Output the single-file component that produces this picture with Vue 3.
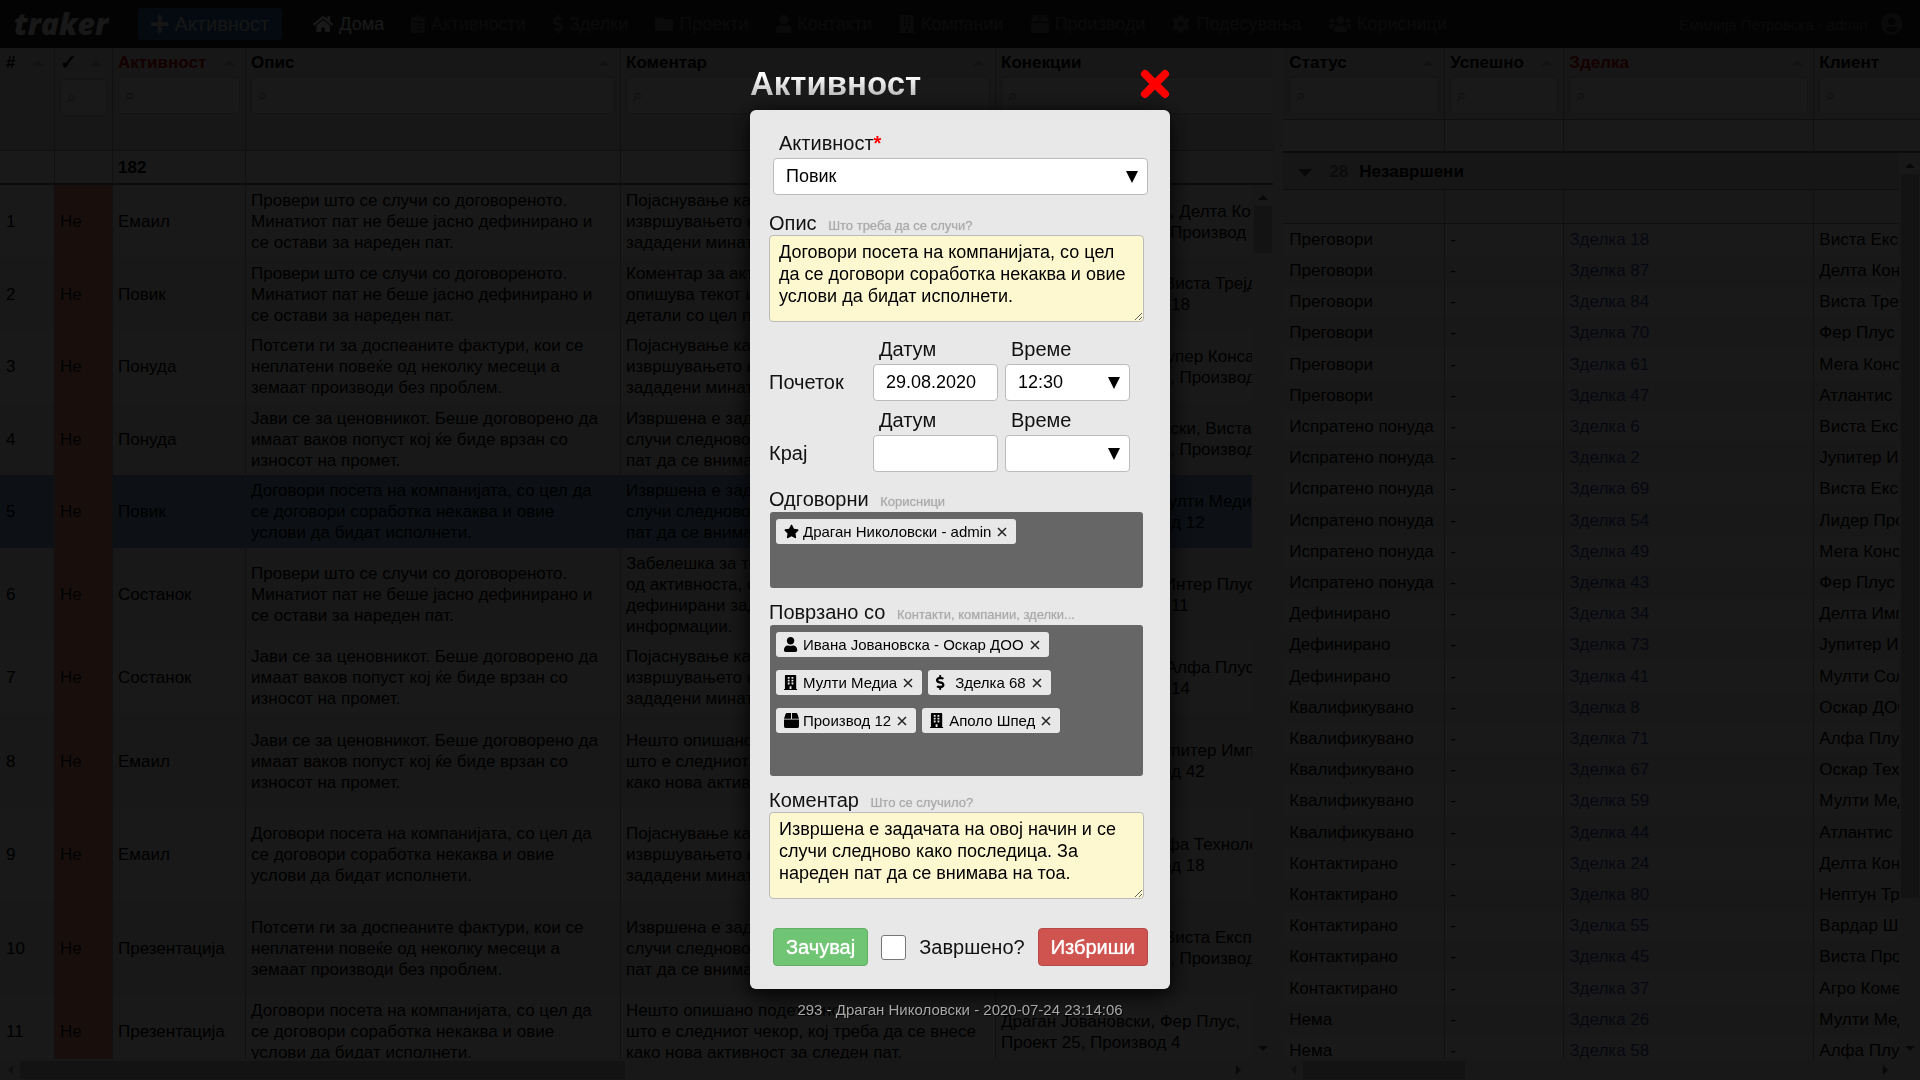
<script setup>
import { ref } from 'vue'

const icons = {
  plus: { w: 448, d: 'M416 208H272V64c0-17.67-14.33-32-32-32h-32c-17.67 0-32 14.33-32 32v144H32c-17.67 0-32 14.33-32 32v32c0 17.67 14.33 32 32 32h144v144c0 17.67 14.33 32 32 32h32c17.67 0 32-14.33 32-32V304h144c17.67 0 32-14.33 32-32v-32c0-17.67-14.33-32-32-32z' },
  home: { w: 576, d: 'M280.37 148.26L96 300.11V464a16 16 0 0 0 16 16l112.06-.29a16 16 0 0 0 15.92-16V368a16 16 0 0 1 16-16h64a16 16 0 0 1 16 16v95.64a16 16 0 0 0 16 16.05L464 480a16 16 0 0 0 16-16V300L295.67 148.26a12.19 12.19 0 0 0-15.3 0zM571.6 251.47L488 182.56V44.05a12 12 0 0 0-12-12h-56a12 12 0 0 0-12 12v72.61L318.47 43a48 48 0 0 0-61 0L4.34 251.47a12 12 0 0 0-1.6 16.9l25.5 31A12 12 0 0 0 45.15 301l235.22-193.74a12.19 12.19 0 0 1 15.3 0L530.9 301a12 12 0 0 0 16.9-1.6l25.5-31a12 12 0 0 0-1.7-16.93z' },
  tasks: { w: 384, d: 'M336 64h-80c0-35.300-28.700-64-64-64s-64 28.700-64 64H48C21.500 64 0 85.500 0 112v352c0 26.500 21.500 48 48 48h288c26.500 0 48-21.500 48-48V112c0-26.500-21.500-48-48-48zM96 424a24 24 0 1 1 0-48 24 24 0 0 1 0 48zm0-96a24 24 0 1 1 0-48 24 24 0 0 1 0 48zm0-96a24 24 0 1 1 0-48 24 24 0 0 1 0 48zm96-192a24 24 0 1 1 0 48 24 24 0 0 1 0-48zm128 376H160v-32h160zm0-96H160v-32h160zm0-96H160v-32h160z' },
  deal: { w: 288, d: 'M209.2 233.4l-108-31.6C88.7 198.2 80 186.5 80 173.5c0-16.3 13.2-29.5 29.5-29.5h66.3c12.2 0 24.2 3.7 34.2 10.5 6.1 4.1 14.3 3.1 19.5-2l34.8-34c7.1-6.9 6.1-18.4-1.8-24.5C238 74.800 207.400 64.100 176 64V16c0-8.800-7.200-16-16-16h-32c-8.800 0-16 7.200-16 16v48h-2.500C45.800 64-5.400 118.700.5 183.600c4.200 46.100 39.400 83.600 83.800 96.600l102.500 30c12.500 3.700 21.200 15.300 21.200 28.300 0 16.300-13.200 29.500-29.500 29.500h-66.300C100 368 88 364.300 78 357.500c-6.100-4.100-14.300-3.100-19.500 2l-34.800 34c-7.100 6.900-6.100 18.400 1.800 24.500 24.500 19.200 55.100 29.900 86.500 30v48c0 8.800 7.200 16 16 16h32c8.800 0 16-7.200 16-16v-48.200c46.600-.9 90.300-28.600 105.700-72.700 21.500-61.600-14.600-124.800-72.500-141.700z' },
  folder: { w: 512, d: 'M464 128H272l-64-64H48C21.49 64 0 85.49 0 112v288c0 26.51 21.49 48 48 48h416c26.51 0 48-21.49 48-48V176c0-26.51-21.49-48-48-48z' },
  user: { w: 448, d: 'M224 256c70.7 0 128-57.3 128-128S294.7 0 224 0 96 57.3 96 128s57.3 128 128 128zm89.6 32h-16.7c-22.2 10.2-46.9 16-72.9 16s-50.6-5.8-72.9-16h-16.7C60.2 288 0 348.2 0 422.4V464c0 26.5 21.5 48 48 48h352c26.5 0 48-21.5 48-48v-41.6c0-74.2-60.2-134.4-134.4-134.4z' },
  building: { w: 448, d: 'M436 480h-20V24c0-13.3-10.7-24-24-24H56C42.7 0 32 10.7 32 24v456H12c-6.6 0-12 5.4-12 12v20h448v-20c0-6.6-5.4-12-12-12zM128 76c0-6.6 5.4-12 12-12h40c6.6 0 12 5.4 12 12v40c0 6.6-5.4 12-12 12h-40c-6.6 0-12-5.4-12-12V76zm0 96c0-6.6 5.4-12 12-12h40c6.6 0 12 5.4 12 12v40c0 6.6-5.4 12-12 12h-40c-6.6 0-12-5.4-12-12v-40zm52 148h-40c-6.6 0-12-5.4-12-12v-40c0-6.6 5.4-12 12-12h40c6.6 0 12 5.4 12 12v40c0 6.6-5.4 12-12 12zm76 160h-64v-84c0-6.6 5.4-12 12-12h40c6.6 0 12 5.4 12 12v84zm64-172c0 6.6-5.4 12-12 12h-40c-6.6 0-12-5.4-12-12v-40c0-6.6 5.4-12 12-12h40c6.6 0 12 5.4 12 12v40zm0-96c0 6.6-5.4 12-12 12h-40c-6.6 0-12-5.4-12-12v-40c0-6.6 5.4-12 12-12h40c6.6 0 12 5.4 12 12v40zm0-96c0 6.6-5.4 12-12 12h-40c-6.6 0-12-5.4-12-12V76c0-6.6 5.4-12 12-12h40c6.6 0 12 5.4 12 12v40z' },
  box: { w: 512, d: 'M509.5 184.6L458.9 32.8C452.4 13.2 434.1 0 413.4 0H272v192h238.7c-.4-2.5-.4-5-1.2-7.4zM240 0H98.6c-20.7 0-39 13.2-45.5 32.8L2.5 184.6c-.8 2.4-.8 4.9-1.2 7.4H240V0zM0 224v240c0 26.5 21.5 48 48 48h416c26.5 0 48-21.5 48-48V224H0z' },
  cog: { w: 512, d: 'M487.4 315.7l-42.6-24.6c4.3-23.2 4.3-47 0-70.2l42.6-24.6c4.9-2.8 7.1-8.6 5.5-14-11.1-35.6-30-67.8-54.7-94.6-3.8-4.1-10-5.1-14.8-2.3L380.8 110c-17.9-15.4-38.5-27.3-60.8-35.1V25.8c0-5.6-3.9-10.5-9.4-11.7-36.7-8.2-74.3-7.8-109.2 0-5.5 1.2-9.4 6.1-9.4 11.7V75c-22.2 7.9-42.8 19.8-60.8 35.1L88.7 85.5c-4.9-2.8-11-1.9-14.8 2.3-24.7 26.7-43.6 58.9-54.7 94.6-1.7 5.4.6 11.2 5.5 14L67.3 221c-4.3 23.2-4.3 47 0 70.2l-42.6 24.6c-4.9 2.8-7.1 8.6-5.5 14 11.1 35.6 30 67.8 54.7 94.6 3.8 4.1 10 5.1 14.8 2.3l42.6-24.6c17.9 15.4 38.5 27.3 60.8 35.1v49.2c0 5.6 3.9 10.5 9.4 11.7 36.7 8.2 74.3 7.8 109.2 0 5.5-1.2 9.4-6.1 9.4-11.7v-49.2c22.2-7.9 42.8-19.8 60.8-35.1l42.6 24.6c4.9 2.8 11 1.9 14.8-2.3 24.7-26.7 43.6-58.9 54.7-94.6 1.5-5.5-.7-11.3-5.6-14.1zM256 336c-44.1 0-80-35.9-80-80s35.9-80 80-80 80 35.9 80 80-35.9 80-80 80z' },
  users: { w: 640, d: 'M96 224c35.3 0 64-28.7 64-64s-28.7-64-64-64-64 28.7-64 64 28.7 64 64 64zm448 0c35.3 0 64-28.7 64-64s-28.7-64-64-64-64 28.7-64 64 28.7 64 64 64zm32 32h-64c-17.6 0-33.5 7.1-45.1 18.6 40.3 22.1 68.9 62 75.1 109.4h66c17.7 0 32-14.3 32-32v-32c0-35.3-28.7-64-64-64zm-256 0c61.9 0 112-50.1 112-112S381.9 32 320 32 208 82.1 208 144s50.1 112 112 112zm76.8 32h-8.3c-20.8 10-43.9 16-68.5 16s-47.6-6-68.5-16h-8.3C179.6 288 128 339.6 128 403.2V432c0 26.5 21.5 48 48 48h288c26.5 0 48-21.5 48-48v-28.8c0-63.6-51.6-115.2-115.2-115.2zm-223.7-13.4C161.5 263.1 145.6 256 128 256H64c-35.3 0-64 28.7-64 64v32c0 17.7 14.3 32 32 32h65.9c6.3-47.4 34.9-87.3 75.2-109.4z' },
  account: { w: 496, d: 'M248 8C111 8 0 119 0 256s111 248 248 248 248-111 248-248S385 8 248 8zm0 96c48.6 0 88 39.4 88 88s-39.4 88-88 88-88-39.4-88-88 39.4-88 88-88zm0 344c-58.7 0-111.3-26.6-146.5-68.2 18.8-35.4 55.6-59.8 98.5-59.8 2.4 0 4.8.4 7.1 1.1 13 4.2 26.6 6.9 40.9 6.9 14.3 0 28-2.7 40.9-6.9 2.3-.7 4.7-1.1 7.1-1.1 42.9 0 79.7 24.4 98.5 59.8C359.3 421.4 306.7 448 248 448z' },
  star: { w: 576, d: 'M259.3 17.8L194 150.2 47.9 171.5c-26.2 3.8-36.7 36.1-17.7 54.6l105.7 103-25 145.5c-4.5 26.3 23.2 46 46.4 33.7L288 439.6l130.7 68.7c23.2 12.2 50.9-7.4 46.4-33.7l-25-145.5 105.7-103c19-18.5 8.5-50.8-17.7-54.6L382 150.2 316.7 17.8c-11.7-23.6-45.6-23.9-57.4 0z' }
}

const nav = [
  ['home', 'Дома'], ['tasks', 'Активности'], ['deal', 'Зделки'], ['folder', 'Проекти'],
  ['user', 'Контакти'], ['building', 'Компании'], ['box', 'Производи'],
  ['cog', 'Подесувања'], ['users', 'Корисници']
]

const taskHeads = [
  { t: '#' }, { t: '✓', search: true, check: true }, { t: 'Активност', search: true, red: true },
  { t: 'Опис', search: true }, { t: 'Коментар', search: true }, { t: 'Конекции', search: true }
]
const taskCols = [55, 58, 133, 375, 375, 300]

const check = ['Провери што се случи со договореното.', 'Минатиот пат не беше јасно дефинирано и', 'се остави за нареден пат.']
const remind = ['Потсети ги за доспеаните фактури, кои се', 'неплатени повеќе од неколку месеци а', 'земаат производи без проблем.']
const price = ['Јави се за ценовникот. Беше договорено да', 'имаат ваков попуст кој ќе биде врзан со', 'износот на промет.']
const visit = ['Договори посета на компанијата, со цел да', 'се договори соработка некаква и овие', 'услови да бидат исполнети.']
const explain = ['Појаснување како се одвивало', 'извршувањето на работите', 'зададени минатиот пат.']
const comment = ['Коментар за активноста што', 'опишува текот и сите', 'детали со цел подобро.']
const done = ['Извршена е задачата и се', 'случи следново како и', 'пат да се внимава на тоа.']
const note = ['Забелешка за текот', 'од активноста, со сите', 'дефинирани задачи и', 'информации.']
const next = ['Нешто опишано подетално и', 'што е следниот чекор, кој треба да се внесе', 'како нова активност за следен пат.']

const tasks = [
  { h: 73, kind: 'Емаил', text: check, note: explain, links: ['Даниела Стојановска, Делта Консалтинг', 'Проект 25, Зделка 5, Производ 1'] },
  { h: 72, kind: 'Повик', text: check, note: comment, links: ['Марија Николовска, Виста Трејд', 'Проект 25, Производ 18'] },
  { h: 73, kind: 'Понуда', text: remind, note: explain, links: ['Ивана Јовановска, Супер Консалтинг', 'Проект 25, Зделка 44, Производ 3'] },
  { h: 72, kind: 'Понуда', text: price, note: done, links: ['Александар Стојановски, Виста Експорт', 'Проект 25, Зделка 44, Производ 9'] },
  { h: 73, kind: 'Повик', text: visit, note: done, links: ['Ивана Јовановска, Мулти Медиа', 'Контакт 168, Производ 12'], on: true },
  { h: 93, kind: 'Состанок', text: check, note: note, links: ['Марија Николовска, Интер Плус', 'Проект 25, Производ 11'] },
  { h: 73, kind: 'Состанок', text: price, note: explain, links: ['Даниела Петровска, Алфа Плус', 'Проект 25, Производ 14'] },
  { h: 94, kind: 'Емаил', text: price, note: next, links: ['Ивана Јовановска, Јупитер Импорт', 'Контакт 168, Производ 42'] },
  { h: 93, kind: 'Емаил', text: visit, note: explain, links: ['Иван Јовановски, Алфа Технологии', 'Контакт 168, Производ 18'] },
  { h: 94, kind: 'Презентација', text: remind, note: done, links: ['Марија Николовска, Виста Експорт', 'Проект 25, Зделка 40, Производ 7'] },
  { h: 73, kind: 'Презентација', text: visit, note: next, links: ['Драган Јовановски, Фер Плус,', 'Проект 25, Производ 4'] }
]

const dealHeads = [
  { t: 'Статус' }, { t: 'Успешно' }, { t: 'Зделка', red: true }, { t: 'Клиент' }
]
const dealCols = [162, 119, 250, 180]
const deals = [
  ['Преговори', 18, 'Виста Експорт'], ['Преговори', 87, 'Делта Консалтинг'], ['Преговори', 84, 'Виста Трејд'],
  ['Преговори', 70, 'Фер Плус'], ['Преговори', 61, 'Мега Консалтинг'], ['Преговори', 47, 'Атлантис'],
  ['Испратено понуда', 6, 'Виста Експорт'], ['Испратено понуда', 2, 'Јупитер Импорт'], ['Испратено понуда', 69, 'Виста Експорт'],
  ['Испратено понуда', 54, 'Лидер Промет'], ['Испратено понуда', 49, 'Мега Консалтинг'], ['Испратено понуда', 43, 'Фер Плус'],
  ['Дефинирано', 34, 'Делта Импорт'], ['Дефинирано', 73, 'Јупитер Импорт'], ['Дефинирано', 41, 'Мулти Солуции'],
  ['Квалификувано', 8, 'Оскар ДОО'], ['Квалификувано', 71, 'Алфа Плус'], ['Квалификувано', 67, 'Оскар Технологии'],
  ['Квалификувано', 59, 'Мулти Медиа'], ['Квалификувано', 44, 'Атлантис'], ['Контактирано', 24, 'Делта Консалтинг'],
  ['Контактирано', 80, 'Нептун Трејд'], ['Контактирано', 55, 'Вардар Шпед'], ['Контактирано', 45, 'Виста Промет'],
  ['Контактирано', 37, 'Агро Комерц'], ['Нема', 26, 'Мулти Медиа'], ['Нема', 58, 'Алфа Плус']
]

const owners = [['star', 'Драган Николовски - admin']]
const related = [
  ['user', 'Ивана Јовановска - Оскар ДОО'], ['building', 'Мулти Медиа'], ['deal', 'Зделка 68'],
  ['box', 'Производ 12'], ['building', 'Аполо Шпед']
]
const description = ref('Договори посета на компанијата, со цел да се договори соработка некаква и овие услови да бидат исполнети.')
const outcome = ref('Извршена е задачата на овој начин и се случи следново како последица. За нареден пат да се внимава на тоа.')
const startDate = ref('29.08.2020')
const endDate = ref('')
const finished = ref(false)
</script>

<template>
  <div class="app">
    <header class="nav">
      <a href="#" class="logo">traker</a>
      <button type="button" class="add">
        <svg class="ic" viewBox="0 0 448 512" aria-hidden="true"><path :d="icons.plus.d" /></svg>Активност
      </button>
      <nav class="menu">
        <a v-for="([icon, label], i) in nav" :key="label" href="#" :class="{ active: i === 0 }">
          <svg class="ic" :viewBox="`0 0 ${icons[icon].w} 512`" aria-hidden="true"><path :d="icons[icon].d" /></svg>{{ label }}
        </a>
      </nav>
      <a href="#" class="account">Емилија Петровска - admin
        <svg class="ic" viewBox="0 0 496 512" aria-hidden="true"><path :d="icons.account.d" /></svg>
      </a>
    </header>

    <main class="panes">
      <section class="pane tasks">
        <div class="clip">
          <table class="head">
            <colgroup><col v-for="(w, i) in taskCols" :key="i" :style="{ width: w + 'px' }"></colgroup>
            <thead>
              <tr class="titles">
                <th v-for="h in taskHeads" :key="h.t" :class="{ red: h.red, check: h.check }">
                  <div class="title"><span>{{ h.t }}</span><i class="sort"></i></div>
                  <input v-if="h.search" type="text" placeholder="⌕" :aria-label="h.t">
                </th>
              </tr>
              <tr class="totals"><td></td><td></td><td>182</td><td></td><td></td><td></td></tr>
            </thead>
          </table>
        </div>
        <div class="body">
          <div class="clip">
            <table class="rows">
              <colgroup><col v-for="(w, i) in taskCols" :key="i" :style="{ width: w + 'px' }"></colgroup>
              <tbody>
                <tr v-for="(r, i) in tasks" :key="i" :class="{ on: r.on }" :style="{ height: r.h + 'px' }">
                  <td>{{ i + 1 }}</td>
                  <td class="no">Не</td>
                  <td>{{ r.kind }}</td>
                  <td><div v-for="l in r.text" :key="l">{{ l }}</div></td>
                  <td><div v-for="l in r.note" :key="l">{{ l }}</div></td>
                  <td><div v-for="l in r.links" :key="l">{{ l }}</div></td>
                </tr>
              </tbody>
            </table>
          </div>
          <div class="vbar"><i class="up"></i><b class="short"></b><i class="down"></i></div>
        </div>
        <div class="hbar"><i class="left"></i><b class="wide"></b><i class="right"></i></div>
      </section>

      <section class="pane deals">
        <div class="clip">
          <table class="head">
            <colgroup><col v-for="(w, i) in dealCols" :key="i" :style="{ width: w + 'px' }"></colgroup>
            <thead>
              <tr class="titles">
                <th v-for="h in dealHeads" :key="h.t" :class="{ red: h.red }">
                  <div class="title"><span>{{ h.t }}</span><i class="sort"></i></div>
                  <input type="text" placeholder="⌕" :aria-label="h.t">
                </th>
              </tr>
              <tr class="totals"><td></td><td></td><td></td><td></td></tr>
            </thead>
          </table>
        </div>
        <div class="body">
          <div class="clip">
            <table class="rows">
              <colgroup><col v-for="(w, i) in dealCols" :key="i" :style="{ width: w + 'px' }"></colgroup>
              <thead>
                <tr class="group"><th colspan="4"><i class="caret"></i><span>28</span>Незавршени</th></tr>
                <tr class="blank"><td></td><td></td><td></td><td></td></tr>
              </thead>
              <tbody>
                <tr v-for="([status, no, client], i) in deals" :key="i">
                  <td>{{ status }}</td><td>-</td><td><a href="#">Зделка {{ no }}</a></td><td>{{ client }}</td>
                </tr>
              </tbody>
            </table>
          </div>
          <div class="vbar"><i class="up"></i><b class="long"></b><i class="down"></i></div>
        </div>
        <div class="hbar"><i class="left"></i><b class="narrow"></b><i class="right"></i></div>
      </section>
    </main>

    <div class="overlay" role="dialog" aria-labelledby="dialog-title">
      <div class="dialog">
        <div class="bar">
          <h1 id="dialog-title">Активност</h1>
          <button type="button" class="close" aria-label="Затвори">
            <svg viewBox="0 0 30 30"><path d="M5 5l20 20M25 5L5 25" /></svg>
          </button>
        </div>
        <form class="card" @submit.prevent>
          <div class="field shifted">
            <label for="kind">Активност<sup>*</sup></label>
            <div class="pick">
              <select id="kind"><option>Повик</option><option>Состанок</option></select>
              <svg viewBox="0 0 12 12" aria-hidden="true"><path d="M0 0h12L6 12z" /></svg>
            </div>
          </div>

          <div class="field desc">
            <label for="desc">Опис <small>Што треба да се случи?</small></label>
            <textarea id="desc" v-model="description"></textarea>
          </div>

          <div class="when first">
            <span class="name">Почеток</span>
            <div>
              <label for="sd">Датум</label>
              <input id="sd" v-model="startDate" type="text">
            </div>
            <div>
              <label for="st">Време</label>
              <div class="pick">
                <select id="st"><option>12:30</option></select>
                <svg viewBox="0 0 12 12" aria-hidden="true"><path d="M0 0h12L6 12z" /></svg>
              </div>
            </div>
          </div>
          <div class="when">
            <span class="name">Крај</span>
            <div>
              <label for="ed">Датум</label>
              <input id="ed" v-model="endDate" type="text">
            </div>
            <div>
              <label for="et">Време</label>
              <div class="pick">
                <select id="et"><option></option></select>
                <svg viewBox="0 0 12 12" aria-hidden="true"><path d="M0 0h12L6 12z" /></svg>
              </div>
            </div>
          </div>

          <div class="field owners">
            <h2>Одговорни <small>Корисници</small></h2>
            <div class="chips small">
              <span v-for="[icon, label] in owners" :key="label" class="chip">
                <svg class="ic" :viewBox="`0 0 ${icons[icon].w} 512`" preserveAspectRatio="xMinYMid meet" aria-hidden="true"><path :d="icons[icon].d" /></svg>{{ label }}
                <button type="button" aria-label="Отстрани"><svg viewBox="0 0 10 10"><path d="M1 1l8 8M9 1L1 9" /></svg></button>
              </span>
            </div>
          </div>

          <div class="field related">
            <h2>Поврзано со <small>Контакти, компании, зделки...</small></h2>
            <div class="chips">
              <span v-for="[icon, label] in related" :key="label" class="chip">
                <svg class="ic" :viewBox="`0 0 ${icons[icon].w} 512`" preserveAspectRatio="xMinYMid meet" aria-hidden="true"><path :d="icons[icon].d" /></svg>{{ label }}
                <button type="button" aria-label="Отстрани"><svg viewBox="0 0 10 10"><path d="M1 1l8 8M9 1L1 9" /></svg></button>
              </span>
            </div>
          </div>

          <div class="field outcome">
            <label for="outcome">Коментар <small>Што се случило?</small></label>
            <textarea id="outcome" v-model="outcome"></textarea>
          </div>

          <div class="actions">
            <button type="submit" class="save">Зачувај</button>
            <label class="finished"><input v-model="finished" type="checkbox">Завршено?</label>
            <button type="button" class="delete">Избриши</button>
          </div>
        </form>
        <p class="meta">293 - Драган Николовски - 2020-07-24 23:14:06</p>
      </div>
    </div>
  </div>
</template>

<style>
body {
  margin: 0;
  overflow: hidden;
}
</style>

<style scoped>
* {
  box-sizing: border-box;
}
.app {
  display: flex;
  flex-direction: column;
  height: 100vh;
  overflow: hidden;
  background: #fff;
  color: #000;
  font: 17px/21px "Liberation Sans", Arial, sans-serif;
}
button,
input,
select,
textarea {
  margin: 0;
  color: inherit;
  font: inherit;
}
a {
  color: inherit;
  text-decoration: none;
}
.ic {
  height: 18px;
  fill: currentColor;
}

/* top bar */
.nav {
  display: flex;
  align-items: center;
  flex: none;
  height: 48px;
  padding: 0 18px 0 14px;
  background: #222;
  color: #6a6a6a;
  font-size: 18px;
  white-space: nowrap;
}
.logo {
  width: 124px;
  color: #eee;
  font: italic 800 30px/48px "Open Sans", sans-serif;
}
.add {
  display: flex;
  align-items: center;
  gap: 6px;
  height: 32px;
  padding: 0 13px;
  border: 0;
  border-radius: 4px;
  background: #2a66a0;
  color: #ddd;
  font-size: 20px;
}
.add .ic {
  height: 20px;
}
.menu {
  display: flex;
  gap: 27px;
  margin-left: 31px;
}
.menu a {
  display: flex;
  align-items: center;
  gap: 6px;
}
.menu .active {
  color: #fff;
}
.account {
  display: flex;
  align-items: center;
  gap: 13px;
  margin-left: auto;
  font-size: 15px;
}
.account .ic {
  height: 22px;
}

/* data panes */
.panes {
  display: flex;
  flex: 1;
  gap: 10px;
  min-height: 0;
  background: #f0f0f0;
}
.pane {
  display: flex;
  flex-direction: column;
  min-width: 0;
  overflow: hidden;
  background: #fff;
}
.tasks {
  flex: 2;
}
.deals {
  flex: 1;
}
.clip {
  flex: 1;
  min-width: 0;
  overflow: hidden;
}
.pane > .clip {
  flex: none;
}
table {
  width: max-content;
  border-collapse: separate;
  border-spacing: 0;
  table-layout: fixed;
  white-space: nowrap;
}
.tasks table {
  width: 1296px;
}
.deals table {
  width: 711px;
}
td,
th {
  padding: 0 5px;
  overflow: hidden;
  border-right: 1px solid #aaa;
  text-align: left;
}
td:first-child,
th:first-child {
  padding-left: 6px;
}
.titles th {
  height: 71px;
  padding-top: 4px;
  background: #e9e9e9;
  vertical-align: top;
}
.tasks .titles th {
  height: 102px;
}
.titles .red {
  color: #c00;
}
.title {
  display: flex;
  align-items: center;
  justify-content: space-between;
  padding-right: 5px;
}
.sort {
  border: 6px solid transparent;
  border-top: 0;
  border-bottom-color: #bbb;
}
.titles input {
  display: block;
  width: 100%;
  height: 37px;
  margin-top: 4px;
  padding: 0 6px;
  border: 1px solid #ccc;
  border-radius: 3px;
  background: #fff;
}
.titles .check span {
  font-size: 20px;
}
.titles .check input {
  margin-top: 6px;
}
.titles input::placeholder {
  color: #bbb;
}
.totals td {
  height: 34px;
  border-top: 1px solid #999;
  border-bottom: 2px solid #777;
  background: #f7f7f7;
  font-weight: bold;
}
.tasks .totals td {
  height: 35px;
}
.body {
  display: flex;
  flex: 1;
  min-height: 0;
}
.rows tbody tr:nth-child(even) {
  background: #efefef;
}
.rows tbody tr.on {
  background: #82a8dc;
}
.rows .no {
  background: #f59488;
  color: #111;
}
.group th {
  height: 37px;
  padding-left: 15px;
  border: 0;
  border-bottom: 1px solid #999;
  background: #ddd;
}
.group span {
  margin: 0 11px 0 17px;
  color: #777;
}
.caret {
  display: inline-block;
  border: 7px solid transparent;
  border-top: 8px solid #555;
  border-bottom: 0;
}
.blank td {
  height: 34px;
  border-bottom: 1px solid #999;
  background: #f3f3f3;
}
.deals tbody tr {
  height: 31px;
}
.deals tbody tr:nth-child(5n) {
  height: 32px;
}
.deals tbody a {
  color: #3f4fa8;
}

/* scrollbars */
.vbar,
.hbar {
  display: flex;
  align-items: center;
  flex: none;
  background: #f3f3f3;
}
.vbar {
  flex-direction: column;
  width: 21px;
  padding: 10px 0 8px;
}
.hbar {
  height: 21px;
  padding: 0 32px 0 8px;
}
.vbar b,
.hbar b {
  background: #c1c1c1;
}
.vbar b {
  width: 18px;
  margin: 6px 0 auto;
}
.hbar b {
  height: 18px;
  margin: 0 auto 0 7px;
}
.short {
  height: 47px;
}
.long {
  flex: 0 1 724px;
}
.wide {
  width: 605px;
}
.narrow {
  width: 162px;
}
.up,
.down,
.left,
.right {
  border: 5px solid transparent;
}
.up {
  border-top: 0;
  border-bottom-color: #505050;
}
.down {
  border-bottom: 0;
  border-top-color: #505050;
}
.left {
  border-left: 0;
  border-right-color: #a0a0a0;
}
.right {
  border-right: 0;
  border-left-color: #505050;
}

/* dialog */
.overlay {
  position: fixed;
  inset: 0;
  display: flex;
  justify-content: center;
  align-items: flex-start;
  padding-top: 58px;
  background: rgba(0, 0, 0, 0.9);
}
.dialog {
  width: 420px;
}
.bar {
  display: flex;
  align-items: center;
  justify-content: space-between;
  height: 52px;
}
h1 {
  margin: 0;
  background: linear-gradient(#fff 30%, #bbb 80%);
  background-clip: text;
  color: transparent;
  font-size: 33px;
  line-height: 40px;
}
.close {
  width: 30px;
  height: 30px;
  padding: 0;
  border: 0;
  background: none;
}
.close svg {
  display: block;
  fill: none;
  stroke: #f00;
  stroke-width: 8;
  stroke-linecap: round;
}
.card {
  padding: 21px 26px 23px 19px;
  border-radius: 6px;
  background: #e8e8e8;
  box-shadow: 0 5px 25px #000;
  font-size: 18px;
}
.card label,
.card h2,
.name {
  display: block;
  margin: 0;
  color: #111;
  font-size: 20px;
  font-weight: normal;
  line-height: 24px;
}
sup {
  color: #f00;
  font-size: 20px;
  font-weight: bold;
  line-height: 0;
  vertical-align: baseline;
}
small {
  margin-left: 6px;
  color: #aaa;
  font-size: 13px;
  line-height: 0;
  text-shadow: 0 0 1px #bbb;
}
.shifted {
  padding-left: 4px;
  margin-right: -4px;
}
.shifted label {
  margin: 0 0 3px 6px;
}
.desc {
  margin-top: 16px;
}
.owners {
  margin-top: 15px;
}
.related,
.outcome {
  margin-top: 12px;
}
textarea {
  display: block;
  width: 100%;
  height: 87px;
  padding: 5px 9px;
  border: 1px solid #bbb;
  border-radius: 4px;
  background: #fdf8cf;
  line-height: 22px;
}
.pick {
  display: grid;
  align-items: center;
}
.pick > * {
  grid-area: 1 / 1;
}
.pick svg {
  justify-self: end;
  width: 12px;
  height: 12px;
  margin-right: 10px;
  pointer-events: none;
}
select,
.when input {
  width: 100%;
  height: 37px;
  padding: 0 12px;
  border: 1px solid #bbb;
  border-radius: 4px;
  appearance: none;
  background: #fff;
}
.when {
  display: grid;
  grid-template-columns: 97px 125px 125px;
  gap: 7px;
  align-items: end;
  margin-top: 7px;
}
.when.first {
  margin-top: 15px;
}
.when label {
  margin: 0 0 3px 6px;
}
.when .name {
  line-height: 37px;
}
.when input {
  display: block;
}
.chips {
  display: flex;
  flex-wrap: wrap;
  align-content: flex-start;
  gap: 13px 6px;
  min-height: 151px;
  margin: 1px 1px 0;
  padding: 7px 6px;
  border-radius: 3px;
  background: #666;
}
.chips.small {
  min-height: 76px;
}
.chip {
  display: flex;
  align-items: center;
  gap: 6px;
  height: 25px;
  padding: 0 9px 0 8px;
  border-radius: 3px;
  background: #e8e8e8;
  font-size: 15px;
}
.chip .ic {
  width: 15px;
  height: 15px;
  margin-right: -2px;
}
.chip button {
  width: 10px;
  height: 10px;
  padding: 0;
  border: 0;
  background: none;
}
.chip button svg {
  display: block;
  width: 10px;
  stroke: #222;
  stroke-width: 1.5;
}
.actions {
  display: flex;
  align-items: center;
  justify-content: space-between;
  height: 38px;
  margin: 29px -4px 0 4px;
}
.actions button {
  height: 38px;
  padding: 0 12px;
  border-radius: 4px;
  color: #fff;
  font-size: 20px;
  text-shadow: 0 0 1px #fff;
}
.save {
  border: 1px solid #61b065;
  background: #70c574;
}
.delete {
  border: 1px solid #b54a46;
  background: #cf534e;
}
.card .finished {
  display: flex;
  align-items: center;
  gap: 13px;
}
.finished input {
  width: 25px;
  height: 25px;
  border: 1px solid #767676;
  border-radius: 3px;
  appearance: none;
  background: #fff;
}
.meta {
  margin: 10px 0 0;
  color: #a8a8a8;
  font-size: 15px;
  line-height: 22px;
  text-align: center;
  text-shadow: 1px 1px 1px #000;
}
</style>
